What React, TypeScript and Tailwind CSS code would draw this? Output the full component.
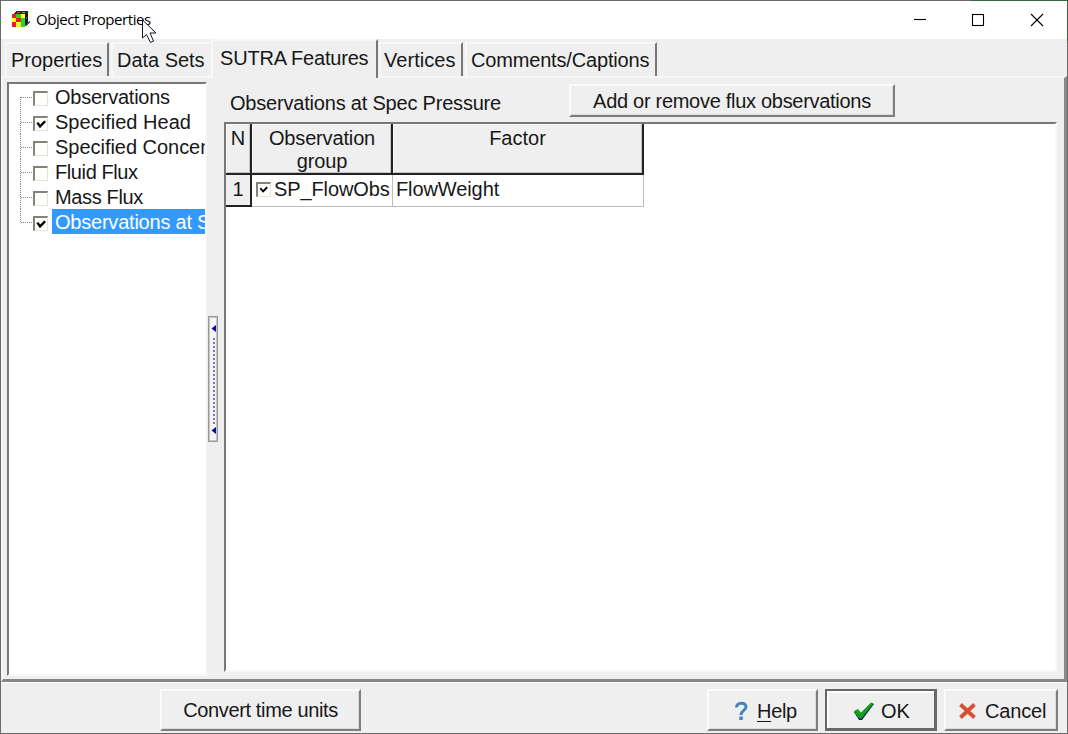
import React from "react";

const raised =
  "border-t-2 border-l-2 border-r-[2px] border-b-[2px] border-t-[#fbfbfb] border-l-[#fbfbfb] border-r-[#7e7e7e] border-b-[#7e7e7e] bg-[#efefef] shadow-[inset_-1px_-1px_0_#dcdcdc]";
const sunken =
  "border-t-2 border-l-2 border-r-2 border-b-2 border-t-[#777777] border-l-[#777777] border-r-[#f8f8f8] border-b-[#f8f8f8] bg-white";
const headCell =
  "border-r-2 border-b-2 border-[#222222] p-0 pt-[3px] font-normal shadow-[inset_1px_1px_0_#fafafa,inset_-1px_-1px_0_#c4c4c4]";

function Check({ on, small = false }: { on: boolean; small?: boolean }) {
  return (
    <span
      className={`${small ? "h-[15px] w-[15px]" : "h-[15px] w-[15px]"} block shrink-0 border-t-2 border-l-2 border-r border-b border-t-[#85827a] border-l-[#85827a] border-r-[#e6e3da] border-b-[#e6e3da] bg-white`}
    >
      {on && (
        <svg viewBox="0 0 12 13" className="block h-[12px] w-[12px]">
          <path d={small ? "M2 4.5 5 8 9.5 3.5" : "M2 5 5 9 10.5 3.5"} fill="none" stroke="#000" strokeWidth={small ? 2 : 2.6} />
        </svg>
      )}
    </span>
  );
}

type RowProps = { label: string; on: boolean; track: string; last?: boolean; selected?: boolean; first?: boolean };

function TreeRow({ label, on, track, last, selected, first }: RowProps) {
  return (
    <div className="flex h-[25px] items-center">
      <svg width="24" height="25" className="shrink-0">
        <path d={first ? "M11.5 13V25" : last ? "M11.5 0V13" : "M11.5 0V25"} stroke="#888" strokeDasharray="1 1" />
        <path d="M12 13.5H23" stroke="#888" strokeDasharray="1 1" />
      </svg>
      <span className="pt-[3px]"><Check on={on} /></span>
      <span className={`ml-[4px] h-[25px] flex-1 pl-[3px] leading-[27px] ${track} ${selected ? "bg-[#3399ff] text-white" : ""}`}>{label}</span>
    </div>
  );
}

function Tab({ label, box, edge = true }: { label: string; box: string; edge?: boolean }) {
  return (
    <div
      className={`${box} flex h-[34px] shrink-0 items-center border-t-2 border-l-2 border-t-[#f7f7f7] border-l-[#f7f7f7] ${edge ? "border-r-2 border-r-[#777777]" : ""}`}
    >
      {label}
    </div>
  );
}

function ModelIcon() {
  return (
    <svg width="20" height="18" viewBox="0 0 20 18" shapeRendering="crispEdges">
      <path d="M1 5 5 1H17L14 5Z" fill="#332042" />
      <path d="M14 5 17 1V13L14 17Z" fill="#171735" />
      <path d="M1 4H14V17H1Z" fill="#f5171b" />
      <path d="M5 4H10V8H5ZM10 8H14V12H10ZM10 12H14V17H10Z" fill="#20dc20" />
      <path d="M1 8H5V12H1ZM10 4H14V8H10ZM5 12H10V17H5Z" fill="#ffff18" />
      <path d="M6 2H9V3H6Z" fill="#f03030" />
      <path d="M11 2H14V3H11Z" fill="#47a7c1" />
      <path d="M15 7H16V9H15Z" fill="#793ba8" />
      <path d="M14 16 18 11 19 12 16 16Z" fill="#555" />
    </svg>
  );
}

export default function App() {
  return (
    <div className="h-[734px] w-[1068px] overflow-hidden bg-[#6b6b6b] bg-[linear-gradient(#35653a,#35653a)] bg-[length:97px_41px] bg-[position:right_top] bg-no-repeat p-px">
      <div className="relative flex h-[732px] w-[1066px] flex-col overflow-hidden bg-[#efefef] font-['Liberation_Sans',Arial,sans-serif] text-[20px] whitespace-nowrap text-[#171717]">
        <header className="flex h-[38px] shrink-0 items-center bg-white">
          <div className="ml-[10px] pb-[2px]"><ModelIcon /></div>
          <span className="ml-[5px] w-[117px] pb-[2px] font-['Open_Sans','Noto_Sans',sans-serif] text-[15px] tracking-[-0.43px] text-black">Object Properties</span>
          <div className="ml-auto flex pr-[21px]">
            <svg width="134" height="16" fill="none" stroke="#000" strokeWidth="1.1">
              <path d="M2 7.5H14" />
              <rect x="60.5" y="2.5" width="11" height="11" />
              <path d="m119 2 12 12M131 2 119 14" />
            </svg>
          </div>
        </header>

        <nav className="flex h-[37px] shrink-0 items-end pl-[4px]">
          <Tab label="Properties" box="w-[104px] pl-[4px]" />
          <Tab label="Data Sets" box="ml-[2px] w-[101px] pl-[4px] tracking-[-0.03px]" edge={false} />
          <div className="z-10 -mb-[2px] -ml-px flex h-[39px] w-[167px] shrink-0 items-center border-t-2 border-r-2 border-l-2 border-t-[#f7f7f7] border-r-[#777777] border-l-[#f7f7f7] bg-[#efefef] pb-[4px] pl-[7px] tracking-[-0.2px]">SUTRA Features</div>
          <Tab label="Vertices" box="ml-px w-[84px] pl-[3px] tracking-[0.05px]" />
          <Tab label="Comments/Captions" box="ml-[2px] w-[192px] pl-[4px] tracking-[-0.17px]" />
        </nav>

        <main className="flex h-[606px] shrink-0 border-t-2 border-r-[3px] border-b-[3px] border-l-2 border-t-[#f6f6f6] border-r-[#888888] border-b-[#868686] border-l-[#f7f7f7]">
          <aside className={`${sunken} mt-[4px] ml-[4px] h-[594px] w-[200px] shrink-0 overflow-hidden`}>
            <div className="w-[330px]">
              <TreeRow label="Observations" on={false} first track="tracking-[-0.25px]" />
              <TreeRow label="Specified Head" on track="tracking-[0.02px]" />
              <TreeRow label="Specified Concentration" on={false} track="tracking-[-0.03px]" />
              <TreeRow label="Fluid Flux" on={false} track="tracking-[-0.4px]" />
              <TreeRow label="Mass Flux" on={false} track="tracking-[-0.35px]" />
              <TreeRow label="Observations at Spec Pressure" on selected last track="tracking-[-0.22px]" />
            </div>
          </aside>

          <div className="mt-[238px] ml-[1px] flex h-[126px] w-[10px] shrink-0 flex-col items-center justify-center border border-[#999999] bg-[#f4f4f4] shadow-[inset_0_0_0_1px_#c4c4c4]">
            <svg width="6" height="120">
              <path d="M6 6v7L1.500 9.5ZM6 108v7L1.500 111.5Z" fill="#0909a1" />
              <path d="M4 19V105" stroke="#7474be" strokeWidth="2" strokeDasharray="2 2" />
            </svg>
          </div>

          <section className="ml-[6px] flex w-[833px] shrink-0 flex-col">
            <div className="flex h-[44px] shrink-0">
              <span className="mt-[13px] w-[340px] pl-[6px] leading-[24px] tracking-[-0.2px]">Observations at Spec Pressure</span>
              <button className={`${raised} mt-[6px] ml-[5px] h-[33px] w-[326px] text-center leading-[28px] tracking-[-0.29px]`}>Add or remove flux observations</button>
            </div>
            <div className={`${sunken} h-[550px] w-[833px]`}>
              <table className="table-fixed border-separate border-spacing-0 leading-[22px]">
                <colgroup><col className="w-[26px]" /><col className="w-[141px]" /><col className="w-[251px]" /></colgroup>
                <thead>
                  <tr className="h-[51px] bg-[#efefef] align-top">
                    <th className={headCell}>N</th>
                    <th className={`${headCell} pl-px leading-[22.5px] tracking-[-0.15px] whitespace-normal`}>Observation group</th>
                    <th className={headCell}>Factor</th>
                  </tr>
                </thead>
                <tbody>
                  <tr className="h-[32px]">
                    <td className="border-r-2 border-b-2 border-[#222222] bg-[#efefef] p-0 pb-[2px] text-center">1</td>
                    <td className="border-r border-b border-[#bdbdbd] p-0 pb-[3px]"><div className="flex items-center pl-[4px]"><span className="pt-px"><Check on small /></span><span className="ml-[3px] tracking-[-0.1px]">SP_FlowObs</span></div></td>
                    <td className="border-r border-b border-[#bdbdbd] p-0 pb-[3px] pl-[3px] tracking-[-0.1px]">FlowWeight</td>
                  </tr>
                </tbody>
              </table>
            </div>
          </section>
        </main>

        <footer className="flex flex-1 items-start border-t border-white pt-[6px]">
          <button className={`${raised} ml-[159px] h-[42px] w-[201px] tracking-[-0.36px]`}>Convert time units</button>
          <button className={`${raised} ml-[346px] flex h-[42px] w-[111px] items-center pt-[2px] pl-[25px]`}>
            <svg width="15" height="20" viewBox="0 0 15 20"><path d="M2.5 6.5C2.5 .8 12 .8 12 6C12 9.5 7 9.5 7 14" fill="none" stroke="#4584bd" strokeWidth="3" /><path d="M5.3 15.5H8.8V19H5.3Z" fill="#4584bd" /></svg>
            <span className="ml-[8px] tracking-[-0.3px]"><span className="underline decoration-1 underline-offset-[3px]">H</span>elp</span>
          </button>
          <button className="ml-[7px] flex h-[42px] w-[112px] items-center border-2 border-r-[3px] border-b-[3px] border-[#686868] bg-[#efefef] pt-[2px] pl-[26px] shadow-[inset_1px_1px_0_1px_#ffffff]">
            <svg width="22" height="20" viewBox="0 0 22 20"><path d="M1 11 5 9 8 12 18 2 21 3 9 19 6 19Z" fill="#101866" /><path d="M1 10 5 8 8 12 18 1.500 20.500 2.500 8.500 17.5 6 17.5Z" fill="#11a512" /></svg>
            <span className="ml-[6px]">OK</span>
          </button>
          <button className={`${raised} ml-[7px] flex h-[42px] w-[114px] items-center pt-[2px] pl-[13px]`}>
            <svg width="17" height="18" viewBox="0 0 17 18"><path d="m1.5 2.5 14 13M15.5 2.5 1.5 15.5" stroke="#d65036" strokeWidth="3.8" /></svg>
            <span className="ml-[9px] tracking-[-0.15px]">Cancel</span>
          </button>
        </footer>

        <svg className="absolute top-[18px] left-[141px]" width="18" height="25" viewBox="0 0 18 25">
          <path d="M.5 1V19L4.5 15.500 8.500 23.500 11.500 22 8 14H14Z" fill="#fff" stroke="#16162a" />
        </svg>
      </div>
    </div>
  );
}
